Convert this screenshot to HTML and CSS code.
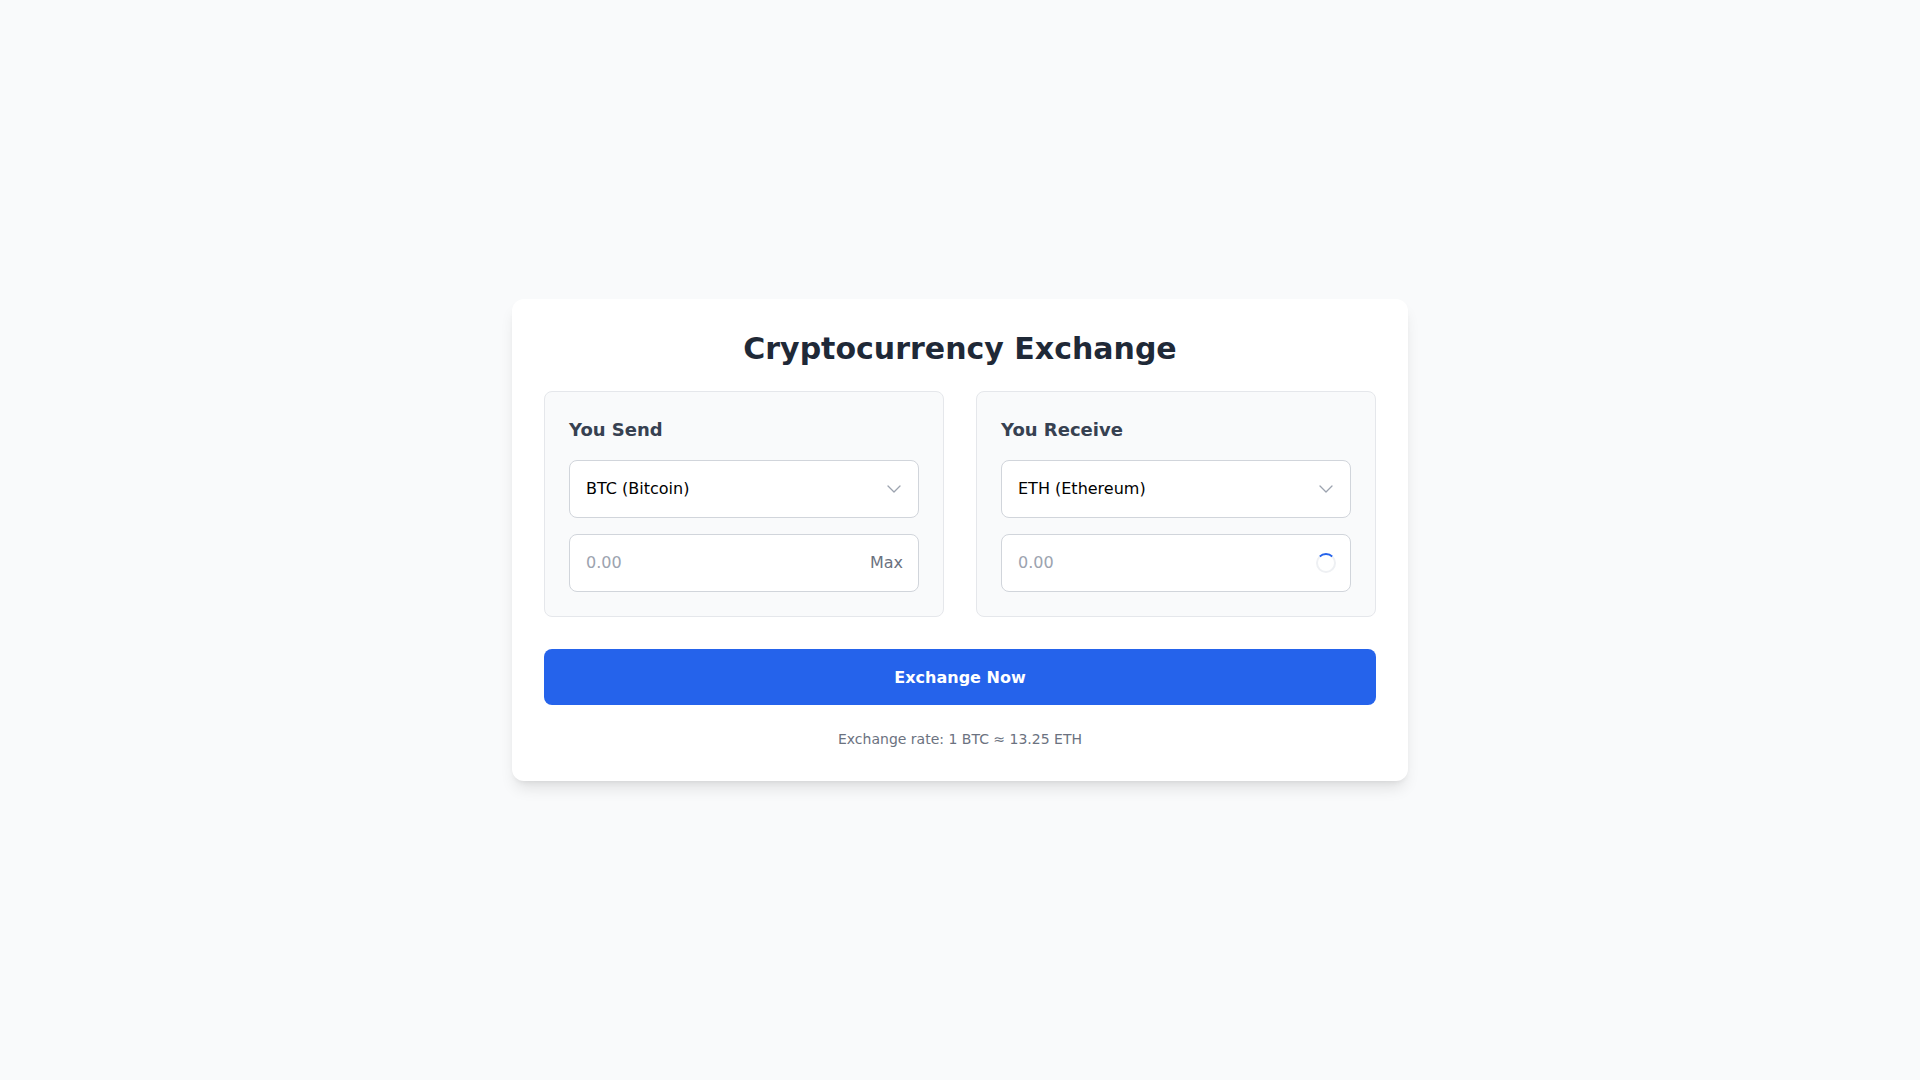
FILE: index.html
```html
<!DOCTYPE html>
<html lang="en">
<head>
<meta charset="utf-8">
<title>Cryptocurrency Exchange</title>
<link rel="stylesheet" href="styles.css">
</head>
<body>
<main class="page">
  <section class="card">
    <h1 class="title">Cryptocurrency Exchange</h1>
    <div class="panels">
      <div class="panel">
        <h2 class="panel-label">You Send</h2>
        <div class="field">
          <span class="field-value">BTC (Bitcoin)</span>
          <svg class="chevron" width="14" height="8" viewBox="0 0 14 8" fill="none"><path d="M1 1l6 6 6-6" stroke="#9ca3af" stroke-width="1.3" stroke-linecap="round" stroke-linejoin="round"/></svg>
        </div>
        <div class="field">
          <span class="field-placeholder">0.00</span>
          <span class="max">Max</span>
        </div>
      </div>
      <div class="panel">
        <h2 class="panel-label">You Receive</h2>
        <div class="field">
          <span class="field-value">ETH (Ethereum)</span>
          <svg class="chevron" width="14" height="8" viewBox="0 0 14 8" fill="none"><path d="M1 1l6 6 6-6" stroke="#9ca3af" stroke-width="1.3" stroke-linecap="round" stroke-linejoin="round"/></svg>
        </div>
        <div class="field">
          <span class="field-placeholder">0.00</span>
          <span class="spinner"></span>
        </div>
      </div>
    </div>
    <button class="btn">Exchange Now</button>
    <p class="rate">Exchange rate: 1 BTC ≈ 13.25 ETH</p>
  </section>
</main>
</body>
</html>
```

FILE: styles.css
```css
* { box-sizing: border-box; }
html, body { margin: 0; padding: 0; }
body {
  background: #f9fafb;
  font-family: "DejaVu Sans", "Liberation Sans", sans-serif;
  width: 1920px;
  height: 1080px;
}
.page {
  height: 1080px;
  display: flex;
  align-items: center;
  justify-content: center;
}
.card {
  width: 896px;
  background: #fff;
  border-radius: 12px;
  box-shadow: 0 10px 15px -3px rgba(0,0,0,0.1), 0 4px 6px -4px rgba(0,0,0,0.1);
  padding: 32px;
}
.title {
  margin: 0 0 24px;
  text-align: center;
  font-size: 30px;
  line-height: 36px;
  font-weight: 700;
  color: #1f2937;
}
.panels {
  display: grid;
  grid-template-columns: 1fr 1fr;
  gap: 32px;
}
.panel {
  background: #f9fafb;
  border: 1px solid #e5e7eb;
  border-radius: 8px;
  padding: 24px;
  display: flex;
  flex-direction: column;
  gap: 16px;
}
.panel-label {
  margin: 0;
  font-size: 18px;
  line-height: 28px;
  font-weight: 700;
  color: #374151;
}
.field {
  height: 58px;
  background: #fff;
  border: 1px solid #d1d5db;
  border-radius: 8px;
  padding: 0 16px;
  display: flex;
  align-items: center;
  justify-content: space-between;
  font-size: 16px;
  line-height: 24px;
}
.field-value { color: #000; }
.field-placeholder { color: #9ca3af; }
.chevron { margin-right: 1px; }
.max { color: #6b7280; margin-right: -1px; }
.spinner {
  width: 20px;
  height: 20px;
  margin-right: -2px;
  border-radius: 50%;
  border: 2px solid #eef0f3;
  border-top-color: #2563eb;
}
.btn {
  display: block;
  width: 100%;
  margin-top: 32px;
  height: 56px;
  border: none;
  border-radius: 8px;
  background: #2563eb;
  color: #fff;
  font-family: inherit;
  font-size: 16px;
  font-weight: 700;
}
.rate {
  margin: 24px 0 0;
  text-align: center;
  font-size: 14px;
  line-height: 20px;
  color: #6b7280;
}
```
